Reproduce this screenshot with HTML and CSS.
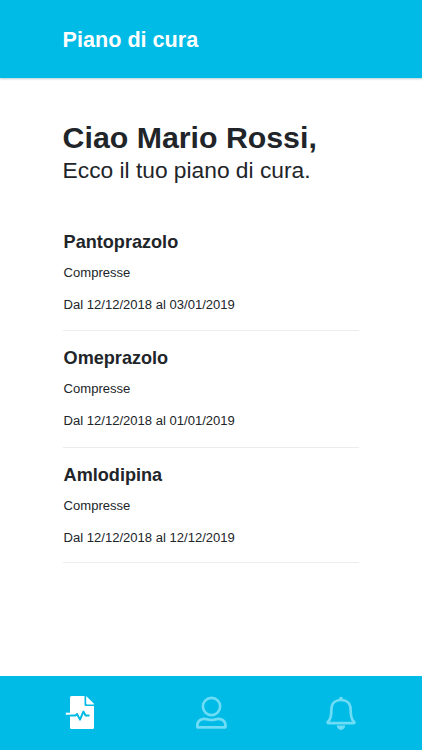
FILE: index.html
```
<!DOCTYPE html>
<html lang="it">
<head>
    <meta charset="UTF-8">
    <meta name="viewport" content="width=device-width, initial-scale=1.0">
    <title>Piano di cura</title>
    <link rel="stylesheet" href="styles.css">
</head>
<body>
    <header class="header">
        <div class="header-title">Piano di cura</div>
    </header>

    <main class="content">
        <h1>Ciao Mario Rossi,</h1>
        <p class="subtitle">Ecco il tuo piano di cura.</p>

        <ul class="drugs">
            <li class="drug">
                <h2>Pantoprazolo</h2>
                <p>Compresse</p>
                <p>Dal 12/12/2018 al 03/01/2019</p>
            </li>
            <li class="drug">
                <h2>Omeprazolo</h2>
                <p>Compresse</p>
                <p>Dal 12/12/2018 al 01/01/2019</p>
            </li>
            <li class="drug">
                <h2>Amlodipina</h2>
                <p>Compresse</p>
                <p>Dal 12/12/2018 al 12/12/2019</p>
            </li>
        </ul>
    </main>

    <nav class="tabbar">
        <a class="tab active" href="#" aria-label="Piano di cura">
            <svg class="icon" viewBox="0 0 36 40">
                <path fill="currentColor" d="M8.500 3H21.500v8.500a1.500 1.500 0 0 0 1.500 1.500H31v21.500a1.500 1.500 0 0 1-1.500 1.500h-21A1.500 1.500 0 0 1 7 34.500v-30A1.500 1.500 0 0 1 8.500 3z"/>
                <path fill="currentColor" d="M23.200 3l7.800 7.800v.6h-6.800a1 1 0 0 1-1-1z"/>
                <path class="pulse-line" d="M7 22.600h5.300l1.700-1.600 3 5.600 3.400-8 2.200 4h3.900"/>
                <path class="pulse-start" d="M2.800 20.700H7.500"/>
            </svg>
        </a>
        <a class="tab" href="#" aria-label="Profilo">
            <svg class="icon" viewBox="0 0 36 40">
                <circle class="stroke" cx="18.500" cy="13.500" r="8.600"/>
                <path class="stroke" d="M4.400 34.300c-.8-5 2.300-8.500 7-8.500 2.500 0 3.700 1.200 7 1.200s4.500-1.200 7-1.200c4.700 0 7.800 3.500 7 8.500z"/>
            </svg>
        </a>
        <a class="tab" href="#" aria-label="Notifiche">
            <svg class="icon" viewBox="0 0 36 40">
                <path class="stroke" d="M5 28.700c2.700-2.200 3.400-5 3.400-12.200 0-5.800 3.900-9.500 9.600-9.500s9.600 3.700 9.600 9.500c0 7.200.7 10 3.400 12.200.7.800.4 1.500-.6 1.500H5.600c-1 0-1.300-.7-.6-1.500z"/>
                <path fill="currentColor" d="M16 7V5.800a2 2 0 0 1 4 0V7zM13.800 32.500h8.400c0 2.400-1.700 4.400-4.200 4.400s-4.200-2-4.200-4.400z"/>
            </svg>
        </a>
    </nav>
</body>
</html>
```

FILE: styles.css
```
* {
    margin: 0;
    padding: 0;
    box-sizing: border-box;
}

body {
    font-family: "Helvetica Neue", "Liberation Sans", Arial, sans-serif;
    background: #fff;
    color: #212529;
    min-height: 100vh;
    display: flex;
    flex-direction: column;
}

.header {
    height: 78px;
    padding: 26px 62.6px 0;
    background: #00bbe6;
    color: #fff;
    box-shadow: 0 1px 2px rgba(0, 90, 120, 0.3);
}

.header-title {
    font-size: 21.6px;
    font-weight: bold;
    line-height: 28px;
}

.content {
    flex: 1;
    padding: 42px 63px 0 62.6px;
}

h1 {
    font-size: 30.3px;
    line-height: 35px;
}

.subtitle {
    font-size: 22.75px;
    line-height: 30px;
}

.drugs {
    list-style: none;
    margin-top: 45px;
}

.drug {
    height: 117px;
    padding: 15px 0 0 1px;
    border-bottom: 1px solid #ececec;
}

.drug:first-child {
    height: 101px;
    padding-top: 0;
}

.drug:last-child {
    height: 115px;
}

h2 {
    font-size: 18.1px;
    line-height: 24px;
    margin-bottom: 9px;
}

.drug p {
    font-size: 13.05px;
    line-height: 20px;
    margin-bottom: 12px;
}

.tabbar {
    height: 74px;
    padding: 0 16px;
    display: flex;
    background: #00bbe6;
}

.tab {
    flex: 1;
    display: flex;
    align-items: center;
    justify-content: center;
    color: #6edcf5;
}

.tab.active {
    color: #fff;
}

.icon {
    width: 36px;
    height: 40px;
}

.stroke {
    fill: none;
    stroke: currentColor;
    stroke-width: 2.7;
    stroke-linejoin: round;
}

.pulse-line,
.pulse-start {
    fill: none;
    stroke-width: 2;
    stroke-linejoin: round;
}

.pulse-line {
    stroke: #00bbe6;
}

.pulse-start {
    stroke: currentColor;
}
```
